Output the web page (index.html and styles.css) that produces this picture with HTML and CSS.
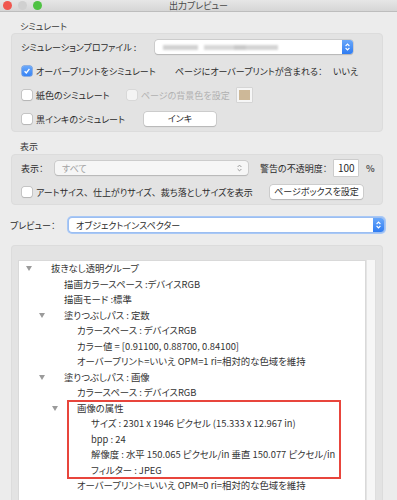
FILE: index.html
```html
<!DOCTYPE html>
<html lang="ja">
<head>
    <meta charset="UTF-8">
    <meta name="viewport" content="width=device-width, initial-scale=1.0">
    <title>出力プレビュー</title>
    <link rel="stylesheet" href="styles.css">
</head>
<body>
    <!-- Title bar -->
    <div class="titlebar">
        <div class="lights">
            <span class="light red"></span>
            <span class="light off"></span>
            <span class="light green"></span>
        </div>
        <div class="title">出力プレビュー</div>
    </div>

    <div class="window">
        <!-- Simulate -->
        <div class="section-label">シミュレート</div>
        <div class="group">
            <div class="row">
                <span class="w-profile">シミュレーションプロファイル :</span>
                <div class="popup profile">
                    <span class="blurred"></span>
                    <span class="stepper">
                        <svg width="7" height="10" viewBox="0 0 7 10"><path d="M1.6 4 L3.5 2.1 L5.4 4 M1.6 6 L3.5 7.9 L5.4 6" fill="none" stroke="#fff" stroke-width="1.1"/></svg>
                    </span>
                </div>
            </div>
            <div class="row">
                <span class="check w-op"><span class="box checked"><svg width="8" height="8" viewBox="0 0 8 8"><path d="M1.6 4.2 L3.3 6 L6.4 1.8" fill="none" stroke="#fff" stroke-width="1.3"/></svg></span>オーバープリントをシミュレート</span>
                <span class="w-note">ページにオーバープリントが含まれる：</span>
                <span>いいえ</span>
            </div>
            <div class="row">
                <span class="check w-paper"><span class="box"></span>紙色のシミュレート</span>
                <span class="check disabled w-bg"><span class="box"></span>ページの背景色を設定</span>
                <span class="swatch"></span>
            </div>
            <div class="row">
                <span class="check w-ink"><span class="box"></span>黒インキのシミュレート</span>
                <span class="button ink">インキ</span>
            </div>
        </div>

        <!-- Display -->
        <div class="section-label">表示</div>
        <div class="group display">
            <div class="row">
                <span class="w-show">表示：</span>
                <div class="popup all">
                    <span class="popup-text">すべて</span>
                    <svg width="7" height="10" viewBox="0 0 7 10"><path d="M1.6 4 L3.5 2.1 L5.4 4 M1.6 6 L3.5 7.9 L5.4 6" fill="none" stroke="#9a9a9a" stroke-width="1"/></svg>
                </div>
                <span class="w-opacity">警告の不透明度：</span>
                <span class="field">100</span>
                <span class="pct">%</span>
            </div>
            <div class="row">
                <span class="check w-sizes"><span class="box"></span>アートサイス<span class="full">、</span>仕上がりサイズ<span class="full">、</span>裁ち落としサイズを表示</span>
                <span class="button pagebox">ページボックスを設定</span>
            </div>
        </div>

        <!-- Preview -->
        <div class="row preview-row">
            <span class="w-preview">プレビュー：</span>
            <div class="popup focused">
                <span class="popup-text">オブジェクトインスペクター</span>
                <span class="stepper">
                    <svg width="7" height="10" viewBox="0 0 7 10"><path d="M1.6 4 L3.5 2.1 L5.4 4 M1.6 6 L3.5 7.9 L5.4 6" fill="none" stroke="#fff" stroke-width="1.1"/></svg>
                </span>
            </div>
        </div>

        <div class="group inspector">
            <div class="tree">
                <div class="item lv0"><span class="tri"></span>抜きなし透明グループ</div>
                <div class="item lv1">描画カラースペース :デバイスRGB</div>
                <div class="item lv1">描画モード :標準</div>
                <div class="item lv1"><span class="tri"></span>塗りつぶしパス : 定数</div>
                <div class="item lv2">カラースペース : デバイスRGB</div>
                <div class="item lv2">カラー値 = [0.91100, 0.88700, 0.84100]</div>
                <div class="item lv2">オーバープリント=いいえ OPM=1 ri=相対的な色域を維持</div>
                <div class="item lv1"><span class="tri"></span>塗りつぶしパス : 画像</div>
                <div class="item lv2">カラースペース : デバイスRGB</div>
                <div class="highlight">
                    <div class="item lv2"><span class="tri"></span>画像の属性</div>
                    <div class="item lv3">サイズ : 2301 x 1946 ピクセル (15.333 x 12.967 in)</div>
                    <div class="item lv3">bpp : 24</div>
                    <div class="item lv3">解像度 : 水平 150.065 ピクセル/in 垂直 150.077 ピクセル/in</div>
                    <div class="item lv3">フィルター : JPEG</div>
                </div>
                <div class="item lv2">オーバープリント=いいえ OPM=0 ri=相対的な色域を維持</div>
            </div>
            <div class="scroll-track"></div>
        </div>
    </div>
</body>
</html>
```
FILE: styles.css
```css
/* General Reset */
* {
    margin: 0;
    padding: 0;
    box-sizing: border-box;
}
body {
    font-family: "Noto Sans CJK JP", "Noto Sans", sans-serif;
    font-size: 9px;
    font-feature-settings: "palt";
    white-space: nowrap;
    color: #2b2b2b;
    background: #ececec;
    width: 397px;
    height: 500px;
    overflow: hidden;
}
.full {
    font-feature-settings: normal;
}

/* Title bar */
.titlebar {
    height: 12px;
    display: flex;
    align-items: center;
    justify-content: center;
    position: relative;
    background: linear-gradient(#e6e6e6, #d6d6d6);
    border-bottom: 1px solid #bdbdbd;
}
.lights {
    position: absolute;
    left: 3px;
    top: 1px;
    display: flex;
    gap: 6px;
}
.light {
    width: 9px;
    height: 9px;
    border-radius: 50%;
}
.red { background: #f0574f; }
.off { background: #d0d0d0; }
.green { background: #4fc243; }
.title {
    color: #4a4a4a;
    font-size: 9px;
    line-height: 12px;
}

/* Window content */
.window {
    padding: 0 14px 0 11px;
}
.section-label {
    margin-top: 8px;
    padding-left: 9px;
    height: 13px;
    line-height: 13px;
    color: #3a3a3a;
}
.display {
    padding-top: 2px;
}
.section-label + .display {
    margin-top: 1px;
}
.group {
    background: #e3e3e3;
    border: 1px solid #dcdcdc;
    border-radius: 4px;
    padding-top: 1px;
}
.row {
    display: flex;
    align-items: center;
    height: 24px;
    padding-left: 9px;
}
.row > * {
    flex-shrink: 0;
}

/* Fixed column widths */
.w-profile { width: 134px; }
.w-op { width: 154px; }
.w-note { width: 158px; }
.w-paper { width: 105px; }
.w-bg { width: 111px; }
.w-ink { width: 123px; }
.w-show { width: 34px; }
.w-opacity { width: 74px; }
.w-sizes { width: 249px; }
.w-preview { width: 59px; }

/* Checkboxes */
.check {
    display: flex;
    align-items: center;
}
.box {
    width: 10px;
    height: 10px;
    margin-left: 1px;
    margin-right: 4px;
    border-radius: 2px;
    background: #fff;
    box-shadow: 0 0 0 0.5px #a9a9a9, 0 0.5px 1px rgba(0, 0, 0, 0.15);
    display: flex;
    align-items: center;
    justify-content: center;
}
.box.checked {
    background: linear-gradient(#6aa8fa, #3683f5);
    box-shadow: 0 0 0 0.5px #3b7de0;
}
.disabled {
    color: #b1b1b1;
}
.disabled .box {
    background: #f4f4f4;
    box-shadow: 0 0 0 0.5px #cdcdcd;
}
.swatch {
    width: 15px;
    height: 14px;
    background: #cdb898;
    border: 2px solid #f6f6f6;
    box-shadow: 0 0 0 0.5px #c8c8c8;
}

/* Buttons and popups */
.button {
    height: 14px;
    line-height: 14px;
    text-align: center;
    background: #fff;
    border-radius: 3px;
    box-shadow: 0 0 0 0.5px #b9b9b9, 0 0.5px 1px rgba(0, 0, 0, 0.2);
}
.ink { width: 72px; }
.pagebox { width: 93px; }
.popup {
    height: 14px;
    display: flex;
    align-items: center;
    background: #fff;
    border-radius: 3px;
    box-shadow: 0 0 0 0.5px #b9b9b9, 0 0.5px 1px rgba(0, 0, 0, 0.2);
    overflow: hidden;
}
.popup-text {
    flex: 1;
    padding-left: 7px;
}
.stepper {
    width: 11px;
    height: 100%;
    display: flex;
    align-items: center;
    justify-content: center;
    background: linear-gradient(#6aa8fa, #2f7cf2);
}
.profile {
    width: 198px;
    justify-content: space-between;
}
.blurred {
    width: 115px;
    height: 5px;
    margin-left: 8px;
    background: linear-gradient(90deg, #d2d2d2 0 30%, transparent 30% 36%, #d8d8d8 36% 62%, #c9c9c9 62% 72%, #d4d4d4 72% 100%);
    filter: blur(1.2px);
}
.all {
    width: 193px;
    background: #f6f6f6;
    color: #a3a3a3;
    padding-right: 5px;
    margin-right: 12px;
}
.field {
    width: 24px;
    height: 16px;
    line-height: 16px;
    padding-left: 4px;
    background: #fff;
    box-shadow: 0 0 0 0.5px #b5b5b5;
    font-size: 10px;
}
.pct {
    margin-left: 8px;
    font-weight: bold;
    color: #555;
}
.preview-row {
    margin: 8px 0;
    padding-left: 0;
    margin-left: -1px;
}
.focused {
    flex: 1;
    margin-right: -1px;
    box-shadow: 0 0 0 0.5px #8fb3ec, 0 0 0 2px #a8c8f6;
}

/* Object inspector */
.inspector {
    display: flex;
    height: 260px;
    padding: 14px 6px 0 6px;
    border-bottom: none;
}
.tree {
    width: 349px;
    background: #fff;
    border: 0.5px solid #d9d9d9;
    color: #333;
    font-size: 9.4px;
}
.scroll-track {
    width: 10px;
    background: #f6f6f6;
    border-left: 1px solid #e4e4e4;
    border-right: 1px solid #dedede;
}
.item {
    position: relative;
    height: 15.5px;
    line-height: 15px;
}
.lv0 { padding-left: 32px; }
.lv1 { padding-left: 45px; }
.lv2 { padding-left: 58px; }
.lv3 { padding-left: 72px; }
.tri {
    position: absolute;
    top: 5px;
    margin-left: -25px;
    border-left: 3.5px solid transparent;
    border-right: 3.5px solid transparent;
    border-top: 5px solid #9b9b9b;
}
.highlight {
    margin-left: 49px;
    width: 272px;
    outline: 2px solid #e8453c;
    outline-offset: -1px;
}
.highlight .item {
    margin-left: -49px;
}
```
